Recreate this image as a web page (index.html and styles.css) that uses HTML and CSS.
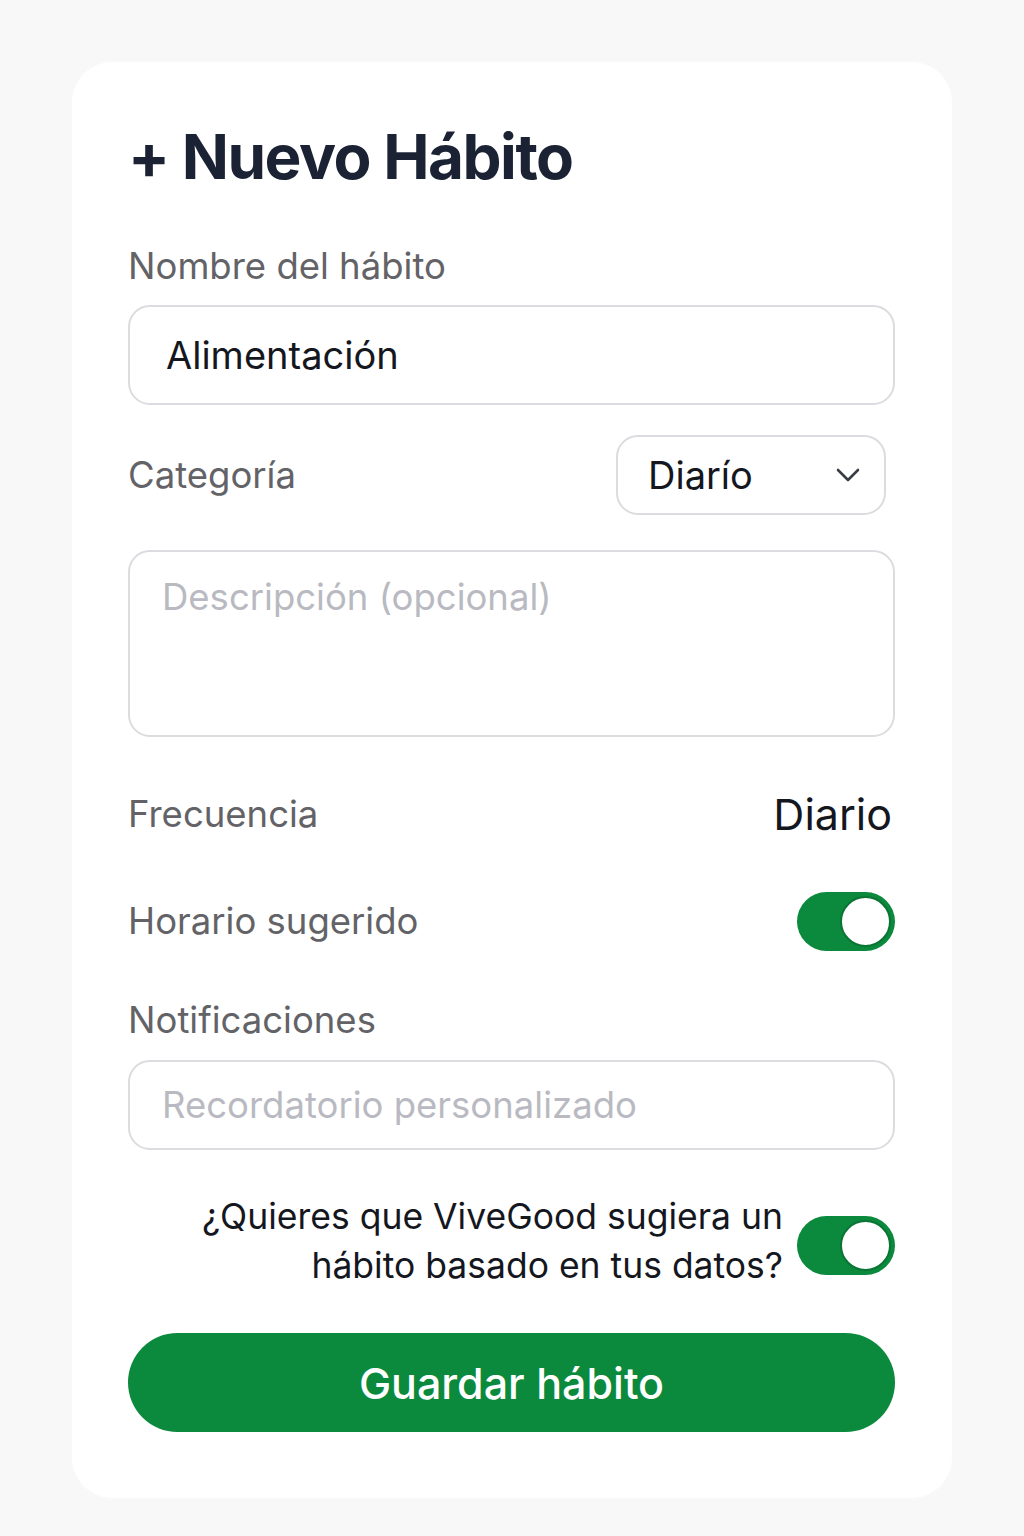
FILE: index.html
```html
<!DOCTYPE html>
<html lang="es">
<head>
<meta charset="utf-8">
<title>Nuevo Hábito</title>
<link rel="stylesheet" href="styles.css">
</head>
<body>
<main class="card">
  <h1 class="title">+ Nuevo Hábito</h1>

  <label class="label label-name">Nombre del hábito</label>
  <div class="field field-name">Alimentación</div>

  <div class="row row-cat">
    <span class="label">Categoría</span>
    <div class="select">
      <span>Diarío</span>
      <svg class="chev" width="24" height="14" viewBox="0 0 24 14"><polyline points="2,2 12,12 22,2" fill="none" stroke="#3a3d44" stroke-width="2.6" stroke-linecap="round" stroke-linejoin="round"/></svg>
    </div>
  </div>

  <div class="textarea">Descripción (opcional)</div>

  <div class="row row-freq">
    <span class="label">Frecuencia</span>
    <span class="value">Diario</span>
  </div>

  <div class="row row-hor">
    <span class="label">Horario sugerido</span>
    <div class="toggle"><span class="knob"></span></div>
  </div>

  <label class="label label-notif">Notificaciones</label>
  <div class="field field-notif placeholder">Recordatorio personalizado</div>

  <div class="row row-q">
    <p class="question">¿Quieres que ViveGood sugiera un<br>hábito basado en tus datos?</p>
    <div class="toggle toggle-q"><span class="knob"></span></div>
  </div>

  <button class="save">Guardar hábito</button>
</main>
</body>
</html>
```
FILE: styles.css
```css
* { box-sizing: border-box; }
html, body { margin: 0; padding: 0; }
body {
  background: #f8f8f8;
  font-family: Inter, "Noto Sans", sans-serif;
  width: 1024px;
  min-height: 1536px;
}
.card {
  width: 880px;
  margin: 62px auto 0;
  background: #ffffff;
  border-radius: 40px;
  padding: 56px 57px 66px 56px;
  display: flex;
  flex-direction: column;
}
.title {
  margin: 0;
  font-size: 62px;
  line-height: 77px;
  font-weight: 700;
  color: #1b2233;
  letter-spacing: -1.5px;
}
.label {
  font-size: 36.5px;
  line-height: 40px;
  color: #636367;
  font-weight: 400;
}
.label-name { margin-top: 51px; }
.field {
  border: 2px solid #dcdce0;
  border-radius: 22px;
  display: flex;
  align-items: center;
  font-size: 38px;
  color: #15171e;
}
.field-name {
  margin-top: 19px;
  height: 100px;
  padding-left: 36px;
}
.row {
  display: flex;
  align-items: center;
  justify-content: space-between;
}
.row-cat { margin-top: 30px; height: 80px; }
.select {
  width: 270px;
  height: 80px;
  margin-right: 9px;
  border: 2px solid #dcdce0;
  border-radius: 22px;
  display: flex;
  align-items: center;
  justify-content: space-between;
  padding: 0 24px 0 30px;
  font-size: 38px;
  color: #15171e;
}
.chev { display: block; }
.textarea {
  margin-top: 35px;
  height: 187px;
  border: 2px solid #dcdce0;
  border-radius: 22px;
  padding: 21px 32px;
  font-size: 36.5px;
  line-height: 48px;
  color: #b9bac1;
}
.row-freq { margin-top: 48px; height: 58px; }
.value {
  font-size: 43px;
  color: #15171e;
  margin-right: 3px;
}
.row-hor { margin-top: 49px; height: 58px; }
.toggle {
  width: 98px;
  height: 59px;
  border-radius: 30px;
  background: #0b893c;
  display: flex;
  align-items: center;
  justify-content: flex-end;
  padding-right: 4px;
  flex-shrink: 0;
}
.toggle-q { margin-top: 8px; }
.knob {
  width: 51px;
  height: 51px;
  border-radius: 50%;
  background: #ffffff;
  border: 2px solid #0a7434;
}
.label-notif { margin-top: 50px; }
.field-notif {
  margin-top: 20px;
  height: 90px;
  padding-left: 32px;
  font-size: 36.5px;
}
.placeholder { color: #b9bac1; }
.row-q {
  margin-top: 42px;
  justify-content: flex-end;
  gap: 14px;
}
.question {
  margin: 0;
  text-align: right;
  font-size: 35.5px;
  line-height: 49px;
  color: #15171e;
}
.save {
  margin-top: 43px;
  height: 99px;
  border: none;
  border-radius: 50px;
  background: #0b893c;
  color: #ffffff;
  font-family: Inter, "Noto Sans", sans-serif;
  font-size: 43px;
  font-weight: 500;
  cursor: pointer;
}
```
